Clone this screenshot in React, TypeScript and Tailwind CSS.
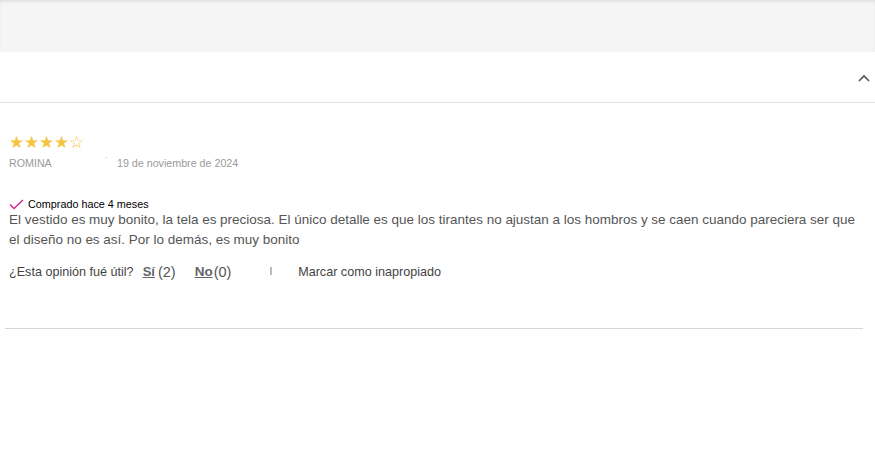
import React from "react";

export default function App() {
  return (
    <div className="w-[875px] h-[452px] bg-white overflow-hidden" style={{ fontFamily: '"Liberation Sans", Arial, sans-serif' }}>
      <div className="h-[52px] bg-[#f5f5f5] shadow-[inset_0_3px_4px_-2px_rgba(0,0,0,0.12)]" />
      <div className="h-[51px] flex items-center justify-end pr-[4px] border-b border-[#e3e3e3]">
        <svg width="14" height="10" viewBox="0 0 14 10" className="mt-[2px]">
          <path d="M2 8 L7 3 L12 8" fill="none" stroke="#555" strokeWidth="1.6" />
        </svg>
      </div>
      <div className="pl-[9px] pr-[10px]">
        <div className="pt-[32px] flex text-[17px] leading-[15px] text-[#f6c443]">
          <span>★</span><span>★</span><span>★</span><span>★</span><span>☆</span>
        </div>
        <div className="mt-[7px] flex items-center text-[10.7px] leading-[12px] text-[#9a9a9a]">
          <span className="w-[96px]">ROMINA</span>
          <span className="w-[12px] text-[8px] -mt-[6px]">ˋ</span>
          <span>19 de noviembre de 2024</span>
        </div>
        <div className="mt-[29px] flex items-center gap-[4px] text-[10.8px] leading-[12px] text-black">
          <svg width="15" height="11" viewBox="0 0 15 11">
            <path d="M1 5.5 L5 9.5 L14 1" fill="none" stroke="#d4278a" strokeWidth="1.4" />
          </svg>
          <span>Comprado hace 4 meses</span>
        </div>
        <p className="mt-[0px] text-[13.47px] leading-[20px] text-[#555]">
          El vestido es muy bonito, la tela es preciosa. El único detalle es que los tirantes no ajustan a los hombros y se caen cuando pareciera ser que el diseño no es así. Por lo demás, es muy bonito
        </p>
        <div className="mt-[12px] flex items-center text-[12.6px] leading-[20px] text-[#444]">
          <span>¿Esta opinión fué útil?</span>
          <span className="ml-[9px] font-bold underline text-[#666] text-[13px]">Sí</span>
          <span className="ml-[3px] text-[14.5px] text-[#555]">(2)</span>
          <span className="ml-[19px] font-bold underline text-[#666] text-[13.5px]">No</span>
          <span className="ml-[1px] text-[14.5px] text-[#555]">(0)</span>
          <span className="ml-[38px] text-[10px] text-[#777]">I</span>
          <span className="ml-[26px]">Marcar como inapropiado</span>
        </div>
      </div>
      <div className="mt-[46px] ml-[5px] w-[858px] border-t border-[#d6d6d6]" />
    </div>
  );
}
